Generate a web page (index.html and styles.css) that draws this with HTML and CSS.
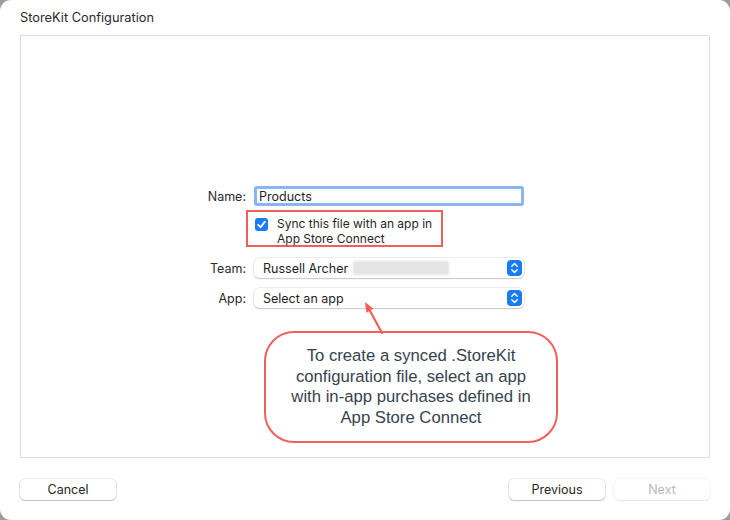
FILE: index.html
```html
<!DOCTYPE html>
<html>
<head>
<meta charset="utf-8">
<link rel="stylesheet" href="styles.css">
</head>
<body>
<div class="window">
  <div class="title">StoreKit Configuration</div>
  <div class="panel">
    <div class="form">
      <div class="label">Name:</div>
      <div class="field"><span>Products</span></div>
      <div class="spacer"></div>
      <div class="sync">
        <span class="check"><svg width="13" height="13" viewBox="0 0 13 13"><path d="M3.2 6.8 L5.6 9.2 L9.9 3.6" fill="none" stroke="#fff" stroke-width="1.8" stroke-linecap="round" stroke-linejoin="round"/></svg></span>
        <span class="sync-text">Sync this file with an app in<br>App Store Connect</span>
      </div>
      <div class="label team-label">Team:</div>
      <div class="popup team-popup"><span>Russell Archer</span><span class="blur"></span><span class="stepper"><svg width="15" height="16" viewBox="0 0 15 16"><path d="M4.8 6.2 L7.5 3.6 L10.2 6.2 M4.8 9.8 L7.5 12.4 L10.2 9.8" fill="none" stroke="#fff" stroke-width="1.4" stroke-linecap="round" stroke-linejoin="round"/></svg></span></div>
      <div class="label app-label">App:</div>
      <div class="popup app-popup"><span>Select an app</span><span class="stepper"><svg width="15" height="16" viewBox="0 0 15 16"><path d="M4.8 6.2 L7.5 3.6 L10.2 6.2 M4.8 9.8 L7.5 12.4 L10.2 9.8" fill="none" stroke="#fff" stroke-width="1.4" stroke-linecap="round" stroke-linejoin="round"/></svg></span></div>
    </div>
    <div class="callout">To create a synced .StoreKit<br>configuration file, select an app<br>with in-app purchases defined in<br>App Store Connect</div>
    <svg class="arrow" width="40" height="45" viewBox="0 0 40 45"><path d="M29 36 L16 12" stroke="#f0605a" stroke-width="2.2" fill="none" stroke-linecap="round"/><path d="M12 5 L20.4 11.7 L13.4 15.7 Z" fill="#f0605a"/></svg>
  </div>
  <div class="footer">
    <button class="btn">Cancel</button>
    <div class="right">
      <button class="btn">Previous</button>
      <button class="btn disabled">Next</button>
    </div>
  </div>
</div>
</body>
</html>
```
FILE: styles.css
```css
html, body {
  margin: 0;
  padding: 0;
  width: 730px;
  height: 520px;
  background: #9c9c9c;
  overflow: hidden;
}
.window {
  width: 730px;
  height: 520px;
  box-sizing: border-box;
  background: #ffffff;
  border-radius: 11px;
  padding: 0 20px;
  display: flex;
  flex-direction: column;
  font-family: Inter, "Liberation Sans", sans-serif;
  font-size: 12.5px;
  color: #262626;
}
.title {
  height: 35px;
  box-sizing: border-box;
  padding-top: 10px;
  font-size: 12.8px;
  color: #2a2a2a;
}
.panel {
  position: relative;
  height: 423px;
  box-sizing: border-box;
  border: 1px solid #dedede;
  background: #fff;
}
.form {
  display: grid;
  grid-template-columns: 225px 270px;
  column-gap: 8px;
  padding-top: 150px;
  align-items: center;
}
.label {
  text-align: right;
  font-size: 12.5px;
  color: #2a2a2a;
}
.field {
  height: 20px;
  box-sizing: border-box;
  border: 3px solid #8ab4f2;
  border-radius: 3px;
  display: flex;
  align-items: center;
  padding-left: 2px;
  font-size: 12.5px;
  color: #1e1e1e;
  background: #fff;
}
.spacer { height: 1px; }
.sync {
  margin-top: 4px;
  margin-left: -8px;
  width: 197px;
  height: 37px;
  box-sizing: border-box;
  border: 2px solid #f0605a;
  display: flex;
  align-items: flex-start;
  padding: 4px 0 0 7px;
}
.check {
  width: 13px;
  height: 13px;
  border-radius: 3px;
  background: #1a7cf5;
  display: flex;
  margin-top: 2px;
  flex-shrink: 0;
}
.sync-text {
  margin-left: 9px;
  font-size: 12px;
  line-height: 15px;
  color: #262626;
}
.team-label, .team-popup { margin-top: 11px; }
.app-label, .app-popup { margin-top: 10px; }
.popup {
  height: 20px;
  box-sizing: border-box;
  border-radius: 5px;
  background: #fff;
  box-shadow: 0 0 0 0.5px rgba(0,0,0,0.14), 0 1px 1.5px rgba(0,0,0,0.16);
  display: flex;
  align-items: center;
  padding-left: 9px;
  position: relative;
  font-size: 12.5px;
  color: #1e1e1e;
}
.blur {
  width: 96px;
  height: 14px;
  margin-left: 5px;
  background: #e4e4e4;
  border-radius: 2px;
  filter: blur(1px);
}
.stepper {
  position: absolute;
  right: 2px;
  top: 2px;
  width: 15px;
  height: 16px;
  border-radius: 4px;
  background: #1a7cf5;
  display: flex;
}
.callout {
  margin-top: 23px;
  margin-left: 243px;
  width: 294px;
  height: 112px;
  box-sizing: border-box;
  border: 2px solid #f0605a;
  border-radius: 30px;
  padding: 13px 2px 0;
  text-align: center;
  font-family: "Liberation Sans", Arial, sans-serif;
  font-size: 16.7px;
  line-height: 20.5px;
  color: #37424e;
}
.arrow {
  position: absolute;
  left: 332px;
  top: 261px;
}
.footer {
  margin-top: 21px;
  display: flex;
  justify-content: space-between;
}
.right {
  display: flex;
  gap: 9px;
}
.btn {
  width: 96px;
  height: 21px;
  border: none;
  border-radius: 5px;
  background: #fff;
  box-shadow: 0 0 0 0.5px rgba(0,0,0,0.16), 0 1px 1.5px rgba(0,0,0,0.18);
  font-family: Inter, "Liberation Sans", sans-serif;
  font-size: 12.5px;
  color: #262626;
  padding: 0;
}
.btn.disabled {
  color: #b8b8b8;
  box-shadow: 0 0 0 0.5px rgba(0,0,0,0.08), 0 1px 1px rgba(0,0,0,0.06);
}
```
